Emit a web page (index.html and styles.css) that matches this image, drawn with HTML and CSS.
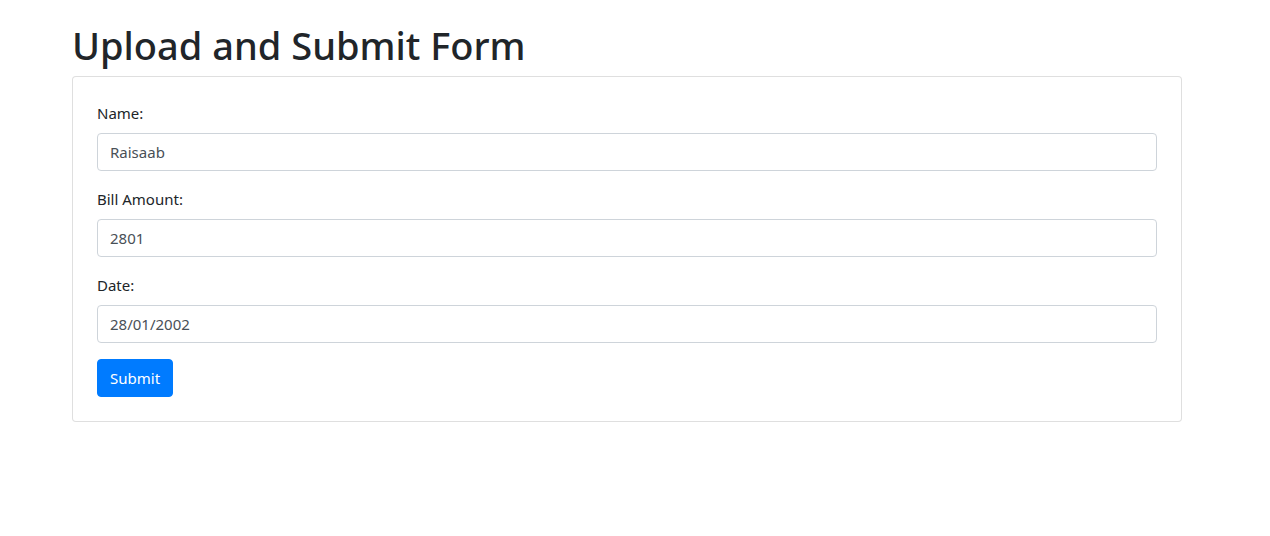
FILE: index.html
```html
<!DOCTYPE html>
<html lang="en">
<head>
<meta charset="utf-8">
<title>Upload and Submit Form</title>
<link rel="stylesheet" href="styles.css">
</head>
<body>
<div class="container">
  <h1 class="title">Upload and Submit Form</h1>
  <div class="card">
    <form class="card-body">
      <div class="form-group">
        <label class="label" for="name">Name:</label>
        <input class="control" id="name" type="text" value="Raisaab">
      </div>
      <div class="form-group">
        <label class="label" for="amount">Bill Amount:</label>
        <input class="control" id="amount" type="text" value="2801">
      </div>
      <div class="form-group">
        <label class="label" for="date">Date:</label>
        <input class="control" id="date" type="text" value="28/01/2002">
      </div>
      <button class="btn" type="button">Submit</button>
    </form>
  </div>
</div>
</body>
</html>
```
FILE: styles.css
```css
* { box-sizing: border-box; }
html, body { margin: 0; padding: 0; background: #fff; }
body {
  font-family: "Noto Sans", "Open Sans", "Liberation Sans", sans-serif;
  font-size: 16px;
  line-height: 1.5;
  color: #212529;
}
.container {
  width: 1110px;
  margin-left: 72px;
  padding-top: 21px;
}
.title {
  margin: 0 0 7px 0;
  font-size: 38px;
  font-weight: 500;
  line-height: 48px;
  color: #212529;
}
.card {
  border: 1px solid rgba(0,0,0,.125);
  border-radius: 4px;
  background: #fff;
}
.card-body {
  display: flex;
  flex-direction: column;
  padding: 24px;
  margin: 0;
}
.form-group {
  display: flex;
  flex-direction: column;
  margin-bottom: 16px;
}
.label {
  display: block;
  margin-bottom: 8px;
  line-height: 24px;
  font-size: 15px;
}
.control {
  display: block;
  width: 100%;
  height: 38px;
  padding: 6px 12px;
  font-family: inherit;
  font-size: 15px;
  line-height: 24px;
  color: #495057;
  background: #fff;
  border: 1px solid #ced4da;
  border-radius: 4px;
  outline: none;
}
.btn {
  align-self: flex-start;
  height: 38px;
  padding: 6px 12px;
  font-family: inherit;
  font-size: 15px;
  line-height: 24px;
  color: #fff;
  background: #007bff;
  border: 1px solid #007bff;
  border-radius: 4px;
  cursor: pointer;
}
```
